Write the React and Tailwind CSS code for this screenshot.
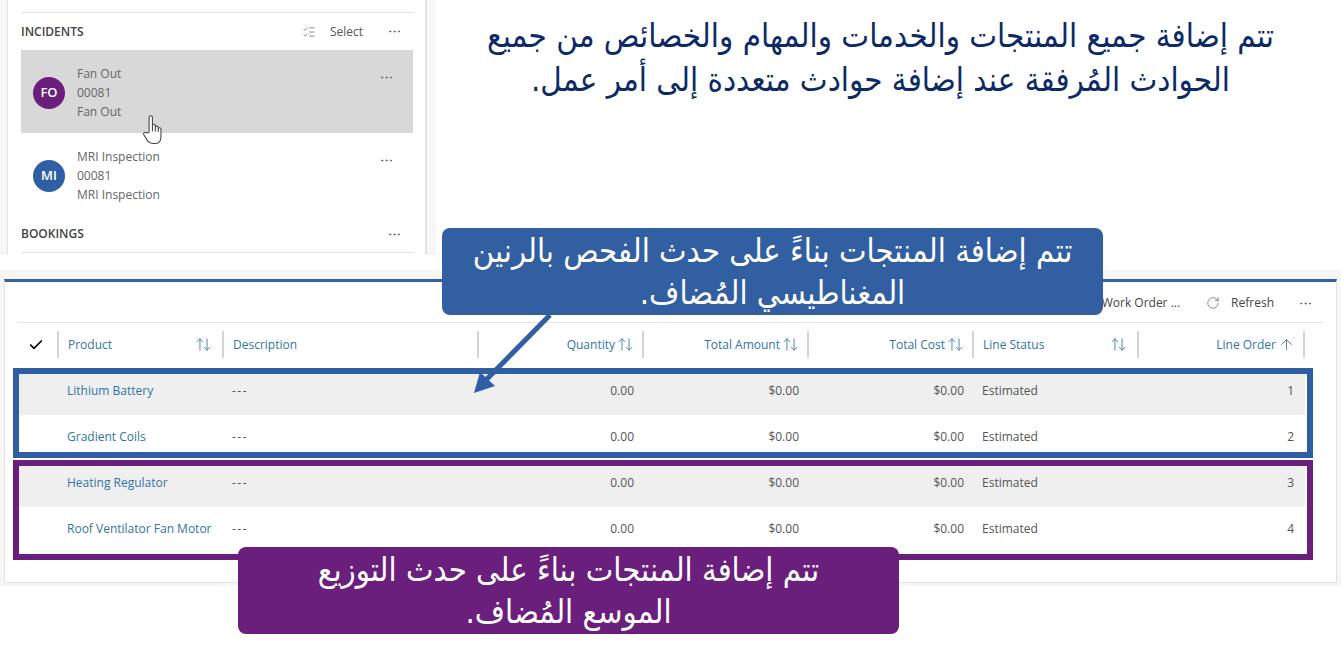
import React from 'react';
import { ArrowUp, ArrowUpDown, Check, ListChecks, MoreHorizontal, RotateCw } from 'lucide-react';

const COLS = 'grid w-[1286px] grid-cols-[40px_165px_255px_165px_165px_165px_165px_166px]';
const FONT = { fontFamily: '"Open Sans", "Liberation Sans", sans-serif' };

const rows = [
  { name: 'Lithium Battery', order: 1, shaded: true },
  { name: 'Gradient Coils', order: 2 },
  { name: 'Heating Regulator', order: 3, shaded: true },
  { name: 'Roof Ventilator Fan Motor', order: 4 },
];

function Dots({ className = '' }) {
  return <MoreHorizontal size={15} strokeWidth={1.25} className={`text-[#555] ${className}`} />;
}

function IncidentRow({ initials, title, color, active }) {
  return (
    <div className={`flex h-[83px] items-center pl-3 pr-[19px] pt-[2px] ${active ? 'bg-[#d8d8d8]' : ''}`}>
      <div className={`flex h-8 w-8 items-center justify-center rounded-full text-[13px] font-semibold text-white ${color}`}>
        {initials}
      </div>
      <div className="ml-3 flex-1 pt-[2px] text-[12px] leading-[18.7px] text-[#666]">
        <div>{title}</div>
        <div>00081</div>
        <div>{title}</div>
      </div>
      <Dots className="mb-[31px]" />
    </div>
  );
}

function HeaderCell({ label, right, icon: Icon = ArrowUpDown, spread, line = true }) {
  return (
    <div className={`flex h-[27px] items-center ${line ? 'border-r-2 border-[#d4d4d4]' : ''} ${right ? 'justify-end pr-2' : 'pl-[9px]'} ${spread ? 'justify-between pr-[10px]' : ''}`}>
      <span className="text-[12px] text-[#2f75a8]">{label}</span>
      {Icon && <Icon size={17} strokeWidth={1.2} className={`text-[#2f75a8] ${spread ? '' : 'ml-[2px]'}`} />}
    </div>
  );
}

function Callout({ className, lines }) {
  return (
    <div
      dir="rtl"
      className={`absolute flex h-[87px] w-[661px] flex-col items-center justify-center rounded-lg text-center text-[32.5px] leading-[42px] text-white ${className}`}
      style={{ fontFamily: '"DejaVu Sans Condensed", "DejaVu Sans", sans-serif' }}
    >
      {lines.map((l) => <div key={l}>{l}</div>)}
    </div>
  );
}

export default function App() {
  return (
    <div className="relative h-[658px] w-[1341px] overflow-hidden bg-white" style={FONT}>
      {/* top part: incidents panel + heading */}
      <div className="flex h-[255px]">
        <div className="w-[436px] border-l-[7px] border-r-[9px] border-[#f7f6f4]">
          <div className="h-full border-l border-r-2 border-[#e4e3e1] bg-white pl-[13px] pr-3 pt-3">
            <div className="h-[1px] bg-[#e3e3e3]" />
            <div className="flex h-[37px] items-center">
              <span className="flex-1 text-[12px] font-semibold text-[#444]">INCIDENTS</span>
              <ListChecks size={14} strokeWidth={1.25} className="text-[#666]" />
              <span className="ml-[14px] text-[12px] text-[#555]">Select</span>
              <Dots className="ml-[24px] mr-[11px]" />
            </div>
            <IncidentRow initials="FO" title="Fan Out" color="bg-[#6b1f7c]" active />
            <IncidentRow initials="MI" title="MRI Inspection" color="bg-[#2f5ea3]" />
            <div className="flex h-[36px] items-center">
              <span className="flex-1 text-[12px] font-semibold text-[#444]">BOOKINGS</span>
              <Dots className="mr-[11px]" />
            </div>
            <div className="h-[1px] bg-[#e3e3e3]" />
          </div>
        </div>
        <div
          dir="rtl"
          className="flex-1 pr-4 pt-[14px] text-center text-[32.8px] leading-[44px] text-[#0b2a66]"
          style={{ fontFamily: '"DejaVu Sans Condensed", "DejaVu Sans", sans-serif' }}
        >
          <div>تتم إضافة جميع المنتجات والخدمات والمهام والخصائص من جميع</div>
          <div>الحوادث المُرفقة عند إضافة حوادث متعددة إلى أمر عمل.</div>
        </div>
      </div>

      {/* work order products card */}
      <div className="mt-[15px] bg-[#f7f6f4] px-1 pb-[3px] pt-[9px]">
        <div className="h-[304px] border border-t-[3px] border-[#e4e3e1] border-t-[#2f62a8] bg-white pl-[13px] pr-[13px]">
          <div className="flex h-[41px] items-center justify-end border-b border-[#e3e3e3] pt-[2px] text-[12px] text-[#444]">
            <span>Work Order ...</span>
            <RotateCw size={14} strokeWidth={1} className="ml-[26px] text-[#444]" />
            <span className="ml-[11px]">Refresh</span>
            <Dots className="ml-[24px] mr-[10px]" />
          </div>
          <div className={`${COLS} ml-[1px] pt-2`}>
            <div className="flex h-[27px] items-center justify-center border-r-2 border-[#d4d4d4]">
              <Check size={16} strokeWidth={2.5} className="mr-1 text-black" />
            </div>
            <HeaderCell label="Product" spread />
            <HeaderCell label="Description" icon={null} />
            <HeaderCell label="Quantity" right />
            <HeaderCell label="Total Amount" right />
            <HeaderCell label="Total Cost" right />
            <HeaderCell label="Line Status" spread />
            <HeaderCell label="Line Order" icon={ArrowUp} right />
          </div>
          <div className="ml-[1px] mt-[11px]">
            {rows.map((r) => (
              <div key={r.order} className={`${COLS} h-[46px] items-center pb-[2px] text-[12px] text-[#555] ${r.shaded ? 'bg-[#efefef]' : ''}`}>
                <div />
                <div className="pl-[8px] text-[#2f75a8]">{r.name}</div>
                <div className="pl-[8px] tracking-[1.5px]">---</div>
                <div className="pr-[10px] text-right">0.00</div>
                <div className="pr-[10px] text-right">$0.00</div>
                <div className="pr-[10px] text-right">$0.00</div>
                <div className="pl-[8px]">Estimated</div>
                <div className="pr-[11px] text-right">{r.order}</div>
              </div>
            ))}
          </div>
        </div>
      </div>

      {/* annotation overlays */}
      <div className="absolute left-[13px] top-[368px] h-[90px] w-[1300px] border-[6px] border-[#2f5ea3]" />
      <div className="absolute left-[13px] top-[460px] h-[100px] w-[1300px] border-[6px] border-[#6b1f7c]" />
      <Callout
        className="left-[442px] top-[228px] bg-[#325fa2]"
        lines={['تتم إضافة المنتجات بناءً على حدث الفحص بالرنين', 'المغناطيسي المُضاف.']}
      />
      <Callout
        className="left-[238px] top-[547px] bg-[#6b1f7c]"
        lines={['تتم إضافة المنتجات بناءً على حدث التوزيع', 'الموسع المُضاف.']}
      />
      <svg className="absolute left-[470px] top-[312px]" width="85" height="85" viewBox="0 0 85 85">
        <path d="M80 3 L13 71" stroke="#2f5ea3" strokeWidth="5" fill="none" />
        <path d="M4 81 L10 60 L25 74 Z" fill="#2f5ea3" />
      </svg>
      {/* hand cursor */}
      <svg className="absolute left-[142px] top-[114px]" width="22" height="31" viewBox="0 0 22 32" fill="white" stroke="#444" strokeWidth="1.1" strokeLinejoin="round">
        <path d="M7 19V3.5a1.7 1.7 0 0 1 3.4 0V13v-1a1.5 1.5 0 0 1 3 0v2a1.5 1.5 0 0 1 3 0v1.5a1.4 1.4 0 0 1 2.8 0V24c0 4-2.5 6.5-6.5 6.5h-2c-2.5 0-4-1-5.5-3L1.5 21.5c-1-1.8 1.2-3.5 2.8-2Z" />
        <path d="M10.4 13v5M13.4 14v4M16.4 15.5v3" fill="none" />
      </svg>
    </div>
  );
}
